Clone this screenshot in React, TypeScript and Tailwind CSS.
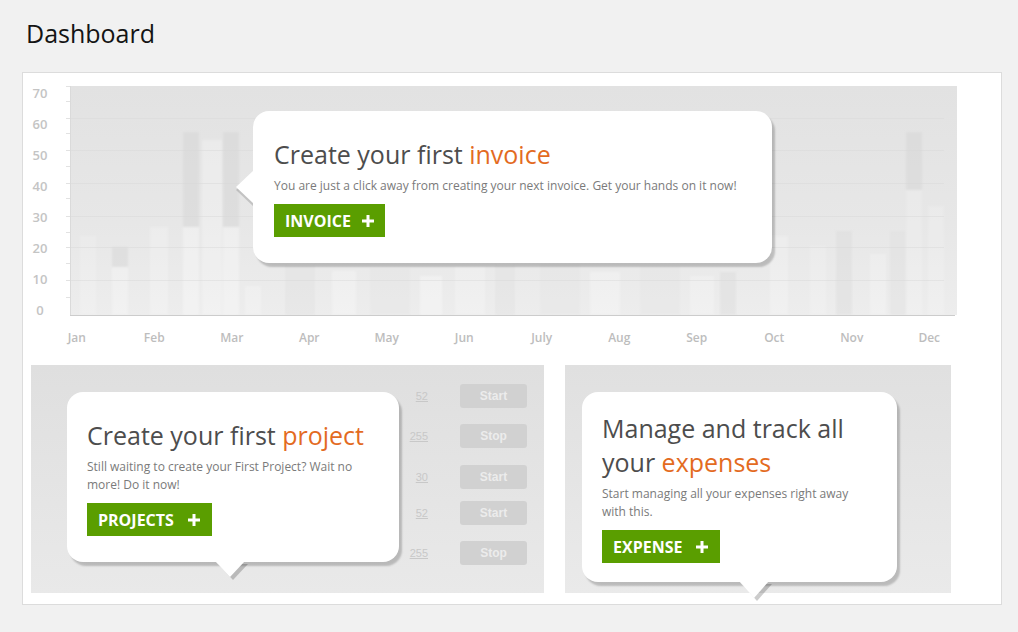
import React from 'react'

const months = ['Jan', 'Feb', 'Mar', 'Apr', 'May', 'Jun', 'July', 'Aug', 'Sep', 'Oct', 'Nov', 'Dec']
const yLabels = [70, 60, 50, 40, 30, 20, 10, 0]
const ticks = [0, 15, 32, 47, 64, 80, 97, 112, 130, 146, 161, 177, 194, 211]
const gridLines = [32, 64, 97, 130, 161, 194]

// faint columns behind the popup: x, width, top, fill, opacity (image coords)
const bars: [number, number, number, string, number][] = [
  [10, 16, 150, '#ffffff', 0.15],
  [42, 16, 181, '#ffffff', 0.25],
  [80, 18, 141, '#ffffff', 0.2],
  [113, 16, 141, '#ffffff', 0.3],
  [132, 20, 54, '#ffffff', 0.25],
  [153, 16, 141, '#ffffff', 0.3],
  [175, 16, 200, '#ffffff', 0.2],
  [215, 30, 180, '#d9d9d9', 0.25],
  [262, 24, 185, '#ffffff', 0.25],
  [300, 40, 182, '#dadada', 0.2],
  [350, 22, 190, '#ffffff', 0.3],
  [385, 30, 180, '#ffffff', 0.2],
  [425, 20, 180, '#d9d9d9', 0.25],
  [470, 40, 178, '#dcdcdc', 0.2],
  [520, 30, 186, '#ffffff', 0.25],
  [570, 40, 180, '#dadada', 0.2],
  [620, 24, 190, '#ffffff', 0.2],
  [650, 16, 186, '#d6d6d6', 0.35],
  [700, 18, 150, '#ffffff', 0.2],
  [740, 16, 160, '#ffffff', 0.15],
  [766, 16, 145, '#d6d6d6', 0.35],
  [800, 16, 168, '#ffffff', 0.2],
  [820, 16, 145, '#dcdcdc', 0.3],
  [836, 16, 104, '#ffffff', 0.15],
  [858, 16, 120, '#ffffff', 0.15],
]
const darkBars: [number, number, number, number][] = [
  [42, 16, 161, 181],
  [113, 16, 46, 141],
  [153, 16, 46, 141],
  [836, 16, 46, 104],
]

const rows = [
  { n: '52', label: 'Start', mt: 'mt-[19px]' },
  { n: '255', label: 'Stop', mt: 'mt-[16px]' },
  { n: '30', label: 'Start', mt: 'mt-[17px]' },
  { n: '52', label: 'Start', mt: 'mt-[12px]' },
  { n: '255', label: 'Stop', mt: 'mt-[16px]' },
]

function Plus() {
  return (
    <svg width="12" height="12" viewBox="0 0 12 12" className="shrink-0">
      <rect x="0" y="4.5" width="12" height="3" fill="#fff" />
      <rect x="4.5" y="0" width="3" height="12" fill="#fff" />
    </svg>
  )
}

function GreenButton({ label, wide }: { label: string; wide?: boolean }) {
  return (
    <button
      className={`flex items-center ${wide ? 'gap-[14px] pr-[12px]' : 'gap-[11px] pr-[11px]'} self-start h-[33px] pl-[11px] bg-[#5a9e00] text-white text-[16px] font-bold leading-none`}
    >
      {label}
      <Plus />
    </button>
  )
}

function ChartSvg() {
  return (
    <svg width="895" height="230" className="block">
      <defs>
        <linearGradient id="bg" x1="0" y1="0" x2="0" y2="1">
          <stop offset="0" stopColor="#e2e2e2" />
          <stop offset="0.6" stopColor="#e7e7e7" />
          <stop offset="1" stopColor="#ededed" />
        </linearGradient>
        <filter id="soft" x="-5%" y="-5%" width="110%" height="110%">
          <feGaussianBlur stdDeviation="1.2" />
        </filter>
      </defs>
      {ticks.map(t => (
        <line key={t} x1="4" x2="8" y1={t + 0.5} y2={t + 0.5} stroke="#e2e2e2" />
      ))}
      <rect x="8" y="0" width="887" height="229" fill="url(#bg)" />
      <g filter="url(#soft)">
        {bars.map(([x, w, y, fill, op], i) => (
          <rect key={i} x={x + 8} y={y} width={w} height={229 - y} fill={fill} fillOpacity={op} />
        ))}
        {darkBars.map(([x, w, y1, y2], i) => (
          <rect key={i} x={x + 8} y={y1} width={w} height={y2 - y1} fill="#d2d2d2" fillOpacity="0.45" />
        ))}
      </g>
      {gridLines.map(g => (
        <line key={g} x1="8" x2="882" y1={g + 0.5} y2={g + 0.5} stroke="#d6d6d6" strokeOpacity="0.45" />
      ))}
      <line x1="8.5" x2="8.5" y1="0" y2="229" stroke="#dadada" />
      <line x1="8" x2="893" y1="229.5" y2="229.5" stroke="#cccccc" />
    </svg>
  )
}

export default function App() {
  return (
    <div className="min-h-[632px] bg-[#f1f1f1] px-[22px] pt-[17px] font-['Open_Sans',sans-serif]">
      <h1 className="ml-[4px] text-[25px] leading-[32px] text-[#141414]">Dashboard</h1>

      <div className="mt-[23px] w-[980px] bg-white border border-[#dcdcdc] pl-[8px] pt-[5px] pb-[11px]">
        {/* Chart */}
        <div className="flex">
          <div className="w-[18px] flex flex-col">
            {yLabels.map(v => (
              <div key={v} className="h-[31px] leading-[31px] text-center text-[13px] font-semibold text-[#c4c4c4]">
                {v}
              </div>
            ))}
          </div>
          <div className="ml-[13px] mt-[8px]">
            <div className="relative w-[895px] h-[230px]">
              <ChartSvg />
              <div className="absolute left-[191px] top-[25px] w-[519px] h-[152px]">
                <div className="absolute left-[-17px] top-[62px] w-[18px] h-[34px] bg-black/15 [clip-path:polygon(100%_0,0_50%,100%_100%)]" />
                <div className="relative h-full rounded-2xl bg-white shadow-[3px_4px_2px_rgba(0,0,0,0.2)] flex flex-col justify-center pl-[21px]">
                  <div className="text-[25px] leading-[34px] text-[#4d4d4d]">
                    Create your first <span className="text-[#e36b1f]">invoice</span>
                  </div>
                  <p className="mt-[6px] text-[12px] leading-[18px] text-[#7a7a7a]">
                    You are just a click away from creating your next invoice. Get your hands on it now!
                  </p>
                  <div className="mt-[9px] flex">
                    <GreenButton label="INVOICE" />
                  </div>
                </div>
                <div className="absolute left-[-17px] top-[59px] w-[18px] h-[34px] bg-white [clip-path:polygon(100%_0,0_50%,100%_100%)]" />
              </div>
            </div>
          </div>
        </div>

        {/* Months */}
        <div className="ml-[7px] mt-[4px] w-[930px] grid grid-cols-12">
          {months.map(m => (
            <div key={m} className="text-center text-[12px] leading-[16px] font-semibold text-[#bdbdbd]">
              {m}
            </div>
          ))}
        </div>

        {/* Panels */}
        <div className="mt-[19px] flex gap-[21px]">
          <div className="relative w-[513px] h-[228px] bg-gradient-to-b from-[#dfdfdf] to-[#e9e9e9] flex justify-end pr-[17px]">
            <div className="flex flex-col">
              {rows.map((r, i) => (
                <div key={i} className={`${r.mt} flex items-center`}>
                  <span className="w-[40px] text-right text-[11px] underline text-[#c8c8c8] font-['Liberation_Sans',sans-serif]">
                    {r.n}
                  </span>
                  <span className="ml-[32px] w-[67px] h-[24px] rounded-[3px] bg-[#d1d1d1] flex items-center justify-center text-[12px] font-bold text-[#ececec] font-['Liberation_Sans',sans-serif]">
                    {r.label}
                  </span>
                </div>
              ))}
            </div>

            <div className="absolute left-[36px] top-[27px] w-[332px] h-[170px]">
              <div className="absolute left-[151px] top-[172px] w-[30px] h-[16px] bg-black/20 [clip-path:polygon(0_0,100%_0,50%_100%)]" />
              <div className="relative h-full rounded-2xl bg-white shadow-[3px_4px_2px_rgba(0,0,0,0.2)] flex flex-col justify-center pl-[20px]">
                <div className="text-[25px] leading-[34px] text-[#4d4d4d]">
                  Create your first <span className="text-[#e36b1f]">project</span>
                </div>
                <p className="mt-[6px] text-[12px] leading-[18px] text-[#7a7a7a] whitespace-nowrap">
                  Still waiting to create your First Project? Wait no
                  <br />
                  more! Do it now!
                </p>
                <div className="mt-[9px] flex">
                  <GreenButton label="PROJECTS" wide />
                </div>
              </div>
              <div className="absolute left-[148px] top-[169px] w-[30px] h-[16px] bg-white [clip-path:polygon(0_0,100%_0,50%_100%)]" />
            </div>
          </div>

          <div className="relative w-[386px] h-[228px] bg-gradient-to-b from-[#e0e0e0] to-[#eaeaea]">
            <div className="absolute left-[17px] top-[27px] w-[315px] h-[190px]">
              <div className="absolute left-[160px] top-[192px] w-[30px] h-[17px] bg-black/20 [clip-path:polygon(0_0,100%_0,50%_100%)]" />
              <div className="relative h-full rounded-2xl bg-white shadow-[3px_4px_2px_rgba(0,0,0,0.2)] flex flex-col justify-center pl-[20px]">
                <div className="text-[25px] leading-[34px] text-[#4d4d4d]">
                  Manage and track all
                  <br />
                  your <span className="text-[#e36b1f]">expenses</span>
                </div>
                <p className="mt-[6px] text-[12px] leading-[18px] text-[#7a7a7a] whitespace-nowrap">
                  Start managing all your expenses right away
                  <br />
                  with this.
                </p>
                <div className="mt-[9px] flex">
                  <GreenButton label="EXPENSE" wide />
                </div>
              </div>
              <div className="absolute left-[157px] top-[189px] w-[30px] h-[17px] bg-white [clip-path:polygon(0_0,100%_0,50%_100%)]" />
            </div>
          </div>
        </div>
      </div>
    </div>
  )
}
